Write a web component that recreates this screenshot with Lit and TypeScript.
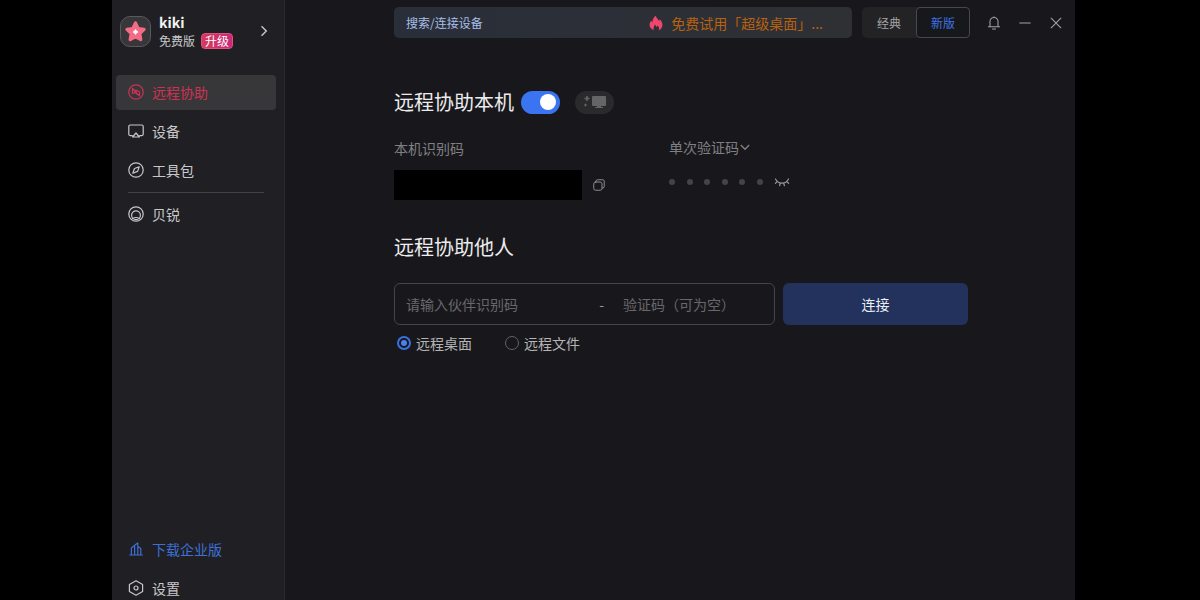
import { LitElement, html, css, svg } from "lit";
import { customElement, state } from "lit/decorators.js";

const line = (size: number, body: unknown) => html`
  <svg width=${size} height=${size} viewBox="0 0 16 16" fill="none" stroke="currentColor"
    stroke-width="1.2" stroke-linecap="round" stroke-linejoin="round" aria-hidden="true">${body}</svg>`;

const icons = {
  assist: svg`<circle cx="8" cy="8" r="7.2"/><path d="M4.400 4.500v5l3.200-1zM4.400 4.500l3.400 2.800M8.200 6.200l3.300 1.600v4L8.200 9.400zM7.600 8.500l3.900 3.300"/>`,
  device: svg`<path d="M4.200 12.600H2.200a1.400 1.400 0 0 1-1.400-1.400V3.400A1.400 1.400 0 0 1 2.200 2h11.600a1.400 1.400 0 0 1 1.400 1.400v7.800a1.400 1.400 0 0 1-1.400 1.400h-2M8 10l3.400 4H4.600z"/>`,
  tools: svg`<circle cx="8" cy="8" r="7.2"/><path d="M11.2 4.8 9.6 9.4l-4.800 1.800 1.700-4.700z"/>`,
  brand: svg`<circle cx="8" cy="8" r="7.2"/><circle cx="8" cy="9.200" r="4.400"/><path d="M3.600 13.200a6 6 0 0 1 8.800 0" stroke-width="1"/>`,
  building: svg`<path d="M1.800 14h12.600M3.400 14V7l3.200-2.400M6.600 14V4.200L9.800 2v12M9.800 5.400l3 2.200V14"/>`,
  settings: svg`<path d="M8 .8 14.600 4.500v7L8 15.200 1.400 11.500v-7z"/><circle cx="8" cy="8" r="2"/>`,
};

@customElement("app-root")
export class AppRoot extends LitElement {
  static styles = css`
    :host {
      display: block;
      background: #000;
      color: #c8c8ca;
      font: 14px/20px "Noto Sans CJK SC", "Noto Sans", sans-serif;
    }
    * { box-sizing: border-box; }
    svg { display: block; flex: none; }
    button, input, select {
      font: inherit; color: inherit; background: none; border: 0;
      margin: 0; padding: 0; min-width: 0; outline: none;
    }
    button { cursor: pointer; }
    a { color: inherit; text-decoration: none; }
    h2 { margin: 0; font-size: 20px; line-height: 30px; font-weight: 400; color: #ececee; }

    .stage { display: flex; height: 100vh; padding: 0 125px 0 112px; }
    .side {
      flex: none; width: 173px; padding: 15px 8px 0 4px;
      display: flex; flex-direction: column;
      background: #202024; border-right: 1px solid #29292e;
    }
    .main { flex: 1; min-width: 0; background: #18181c; }

    .user { display: flex; align-items: center; gap: 8px; padding: 0 8px 0 4px; height: 32px; margin-bottom: 28px; }
    .avatar {
      width: 31px; height: 31px; border-radius: 10px; flex: none;
      display: grid; place-items: center; background: #37373a; border: 1px solid #59595c;
    }
    .who { flex: 1; padding-top: 2px; }
    .name { font-weight: 700; font-size: 14px; line-height: 18px; color: #f2f2f3; }
    .plan { display: flex; align-items: center; gap: 6px; font-size: 12px; line-height: 20px; white-space: nowrap; }
    .badge {
      font-size: 12px; line-height: 14px; height: 16px; padding: 0 3px; border-radius: 4px;
      color: #fff; background: linear-gradient(90deg, #d63a5c, #c9287c); border: 1px solid #e0517c;
    }
    .nav { display: flex; flex-direction: column; gap: 4px; }
    .item { display: flex; align-items: center; gap: 8px; height: 35px; padding: 0 12px 1px; border-radius: 4px; }
    .active { background: #37373a; color: #cb3354; }
    .rule { height: 1px; margin: 0 12px; background: #434347; }
    .foot { margin-top: auto; display: flex; flex-direction: column; gap: 15px; }
    .foot .item { height: 24px; }
    .blue { color: #3d6fd6; }

    .top { display: flex; align-items: center; padding: 7px 12px 0 109px; color: #a3a3a6; }
    .search {
      flex: 1; min-width: 0; display: flex; align-items: center; height: 31px;
      padding: 0 29px 0 12px; border-radius: 5px; font-size: 12px;
      background: linear-gradient(90deg, #292e39, #2f3034);
    }
    .search input { flex: 1; }
    .search input::placeholder { color: #a9bfe6; opacity: 1; }
    .promo { display: flex; align-items: center; gap: 8px; font-size: 14px; color: #b8620f; white-space: nowrap; }
    .tabs { display: flex; margin: 0 17px 0 10px; height: 31px; border-radius: 5px; background: #232325; font-size: 12px; }
    .tab { width: 54px; border-radius: 4px; }
    .tab.on { color: #3f74e6; background: #17181c; border: 1px solid #48484c; }
    .winctl { display: flex; gap: 17px; }

    .body { padding: 49px 107px 0 109px; }
    .title { display: flex; align-items: center; }
    .switch {
      appearance: none; width: 39px; height: 23px; border-radius: 12px; margin: 0 15px 0 7px;
      display: flex; align-items: center; justify-content: flex-end; padding: 0 4px; background: #3a74f0; cursor: pointer;
    }
    .switch::before { content: ""; width: 16px; height: 16px; border-radius: 50%; background: #fff; }
    .switch:not(:checked) { justify-content: flex-start; background: #48484c; }
    .pill { width: 39px; height: 23px; border-radius: 12px; background: #2a2a2c; color: #656568; display: grid; place-items: center; }

    .codes { display: grid; grid-template-columns: 275px 1fr; margin-top: 20px; color: #808084; }
    .label { line-height: 22px; margin-bottom: 11px; }
    .idrow { display: flex; align-items: center; gap: 11px; }
    .idrow button { color: #98989b; }
    .id { width: 188px; height: 30px; background: #000; }
    .pick { display: flex; align-items: center; gap: 1px; height: 20px; }
    .pick select { appearance: none; height: 20px; line-height: 20px; }
    .secret { display: flex; align-items: center; gap: 11px; margin-top: 17px; height: 16px; }
    .dots { display: flex; justify-content: space-between; width: 94px; }
    .dot { width: 6px; height: 6px; border-radius: 50%; background: #444448; }
    .secret button { color: #929295; }

    .other { margin-top: 32px; }
    .form { display: flex; gap: 8px; margin-top: 21px; }
    .fields {
      flex: 1; min-width: 0; display: flex; align-items: center; height: 42px; padding: 0 11px;
      border: 1px solid #454548; border-radius: 6px;
    }
    .fields input::placeholder { color: #68686c; opacity: 1; }
    .partner { flex: 1; }
    .pass { width: 140px; }
    .dash { margin: 0 19px; color: #98989b; }
    .connect { width: 185px; height: 42px; border-radius: 6px; background: #22325c; color: #eceef4; }
    .modes { display: flex; gap: 33px; margin-top: 8px; padding-left: 3px; color: #b4b4b7; }
    .mode { display: flex; align-items: center; gap: 5px; }
    .mode input {
      appearance: none; width: 14px; height: 14px; border-radius: 50%; border: 1px solid #626266;
      display: grid; place-items: center;
    }
    .mode input:checked { border: 2px solid #3a70e0; }
    .mode input:checked::before { content: ""; width: 6px; height: 6px; border-radius: 50%; background: #4a80f0; }
  `;

  @state() private mode = "desktop";

  private item(icon: unknown, text: string, extra = "") {
    return html`<a class="item ${extra}" href="#">${line(16, icon)}<span>${text}</span></a>`;
  }

  private radio(value: string, text: string) {
    return html`<label class="mode">
      <input type="radio" name="mode" .checked=${this.mode === value} @change=${() => (this.mode = value)}>${text}
    </label>`;
  }

  render() {
    return html`
      <div class="stage">
        <aside class="side">
          <div class="user">
            <div class="avatar">
              <svg width="23" height="23" viewBox="0 0 24 24">
                <path d="M12 3.200l2.700 5.700 6.200.9-4.500 4.400 1.100 6.300-5.500-3-5.500 3 1.100-6.300L3.100 9.800l6.200-.9z" fill="#f56b86" stroke="#f56b86" stroke-width="3.400" stroke-linejoin="round"/>
                <path d="M12 9.800l1 1.700 1.700 1-1.700 1-1 1.700-1-1.700-1.700-1 1.700-1z" fill="#fff" stroke="#fff" stroke-width=".8"/>
              </svg>
            </div>
            <div class="who">
              <div class="name">kiki</div>
              <div class="plan">免费版<span class="badge">升级</span></div>
            </div>
            <svg width="8" height="12" viewBox="0 0 8 12" fill="none" stroke="#c8c8ca" stroke-width="1.4"><path d="M1.500 1.200 6.300 6l-4.800 4.800"/></svg>
          </div>
          <nav class="nav">
            ${this.item(icons.assist, "远程协助", "active")}
            ${this.item(icons.device, "设备")}
            ${this.item(icons.tools, "工具包")}
            <div class="rule"></div>
            ${this.item(icons.brand, "贝锐")}
          </nav>
          <div class="foot">
            ${this.item(icons.building, "下载企业版", "blue")}
            ${this.item(icons.settings, "设置")}
          </div>
        </aside>

        <main class="main">
          <header class="top">
            <div class="search">
              <input type="text" aria-label="搜索/连接设备" placeholder="搜索/连接设备">
              <a class="promo" href="#">
                <svg width="14" height="16" viewBox="0 0 14 16"><path fill="#ef476b" d="M6.800.8c.5 2.300 2.300 3.200 3.200 5.200.5-.4.800-1 .8-1.700 1.700 1.700 2.600 3.700 2.600 5.700 0 2.500-1.500 4.400-3.700 5.200.8-1.800.2-3.600-1.400-4.700-.1.900-.5 1.400-1 1.700-.2-1.400-.8-2.200-1.500-2.700 0 1.900-2 3.200-1.100 5.600C2.200 14.200.6 12.400.6 10c0-1.800.8-3.200 1.800-4.400.1 1 .4 1.600 1 2C3.300 4.900 4.500 2.200 6.800.8z"/></svg>
                <span>免费试用「超级桌面」...</span>
              </a>
            </div>
            <div class="tabs">
              <button class="tab">经典</button><button class="tab on">新版</button>
            </div>
            <div class="winctl">
              <button aria-label="通知">${line(14, svg`<path d="M1.600 12.300h12.800M3.400 12.200V6.300a4.600 4.600 0 0 1 9.200 0v5.900M6.300 14.800h3.400M8 1.600V.8"/>`)}</button>
              <button aria-label="最小化">${line(14, svg`<path d="M2 8h12"/>`)}</button>
              <button aria-label="关闭">${line(14, svg`<path d="M2.500 2.500l11 11M13.500 2.500l-11 11"/>`)}</button>
            </div>
          </header>

          <div class="body">
            <div class="title">
              <h2>远程协助本机</h2>
              <input class="switch" type="checkbox" role="switch" aria-label="远程协助本机" checked>
              <button class="pill" aria-label="超级桌面">
                <svg width="22" height="14" viewBox="0 0 22 14" fill="currentColor"><path d="M9 1h12a1 1 0 0 1 1 1v8a1 1 0 0 1-1 1h-4v1h2v1h-8v-1h2v-1H9a1 1 0 0 1-1-1V2a1 1 0 0 1 1-1zM2.200 1h1.600v1.700h1.700v1.600H3.800V6H2.200V4.300H.5V2.700h1.700zM1 8.500h1v1h1v1H2v1H1v-1H0v-1h1z"/></svg>
              </button>
            </div>

            <div class="codes">
              <div>
                <div class="label">本机识别码</div>
                <div class="idrow">
                  <div class="id"></div>
                  <button aria-label="复制">${line(12, svg`<rect x="1" y="4" width="11" height="11" rx="2.500"/><path d="M4 3.800V3a2 2 0 0 1 2-2h7a2 2 0 0 1 2 2v7a2 2 0 0 1-2 2h-.8"/>`)}</button>
                </div>
              </div>
              <div>
                <div class="pick">
                  <select aria-label="验证码类型"><option>单次验证码</option></select>
                  <svg width="10" height="7" viewBox="0 0 10 7" fill="none" stroke="currentColor" stroke-width="1.400"><path d="M.8 1 5 5.200 9.200 1"/></svg>
                </div>
                <div class="secret">
                  <div class="dots">${[0, 1, 2, 3, 4, 5].map(() => html`<span class="dot"></span>`)}</div>
                  <button aria-label="显示验证码">
                    <svg width="16" height="10" viewBox="0 0 16 10" fill="none" stroke="currentColor" stroke-width="1.300" stroke-linecap="round"><path d="M1.500 2C3 4.800 5.300 6.200 8 6.200S13 4.800 14.500 2M3.300 4.400 1.400 6.400M12.700 4.400l1.900 2M6.300 6.100l-.7 2.500M9.700 6.100l.7 2.500"/></svg>
                  </button>
                </div>
              </div>
            </div>

            <h2 class="other">远程协助他人</h2>
            <div class="form">
              <div class="fields">
                <input class="partner" type="text" aria-label="伙伴识别码" placeholder="请输入伙伴识别码">
                <span class="dash">-</span>
                <input class="pass" type="text" aria-label="验证码" placeholder="验证码（可为空）">
              </div>
              <button class="connect">连接</button>
            </div>
            <div class="modes">
              ${this.radio("desktop", "远程桌面")}
              ${this.radio("file", "远程文件")}
            </div>
          </div>
        </main>
      </div>
    `;
  }
}
